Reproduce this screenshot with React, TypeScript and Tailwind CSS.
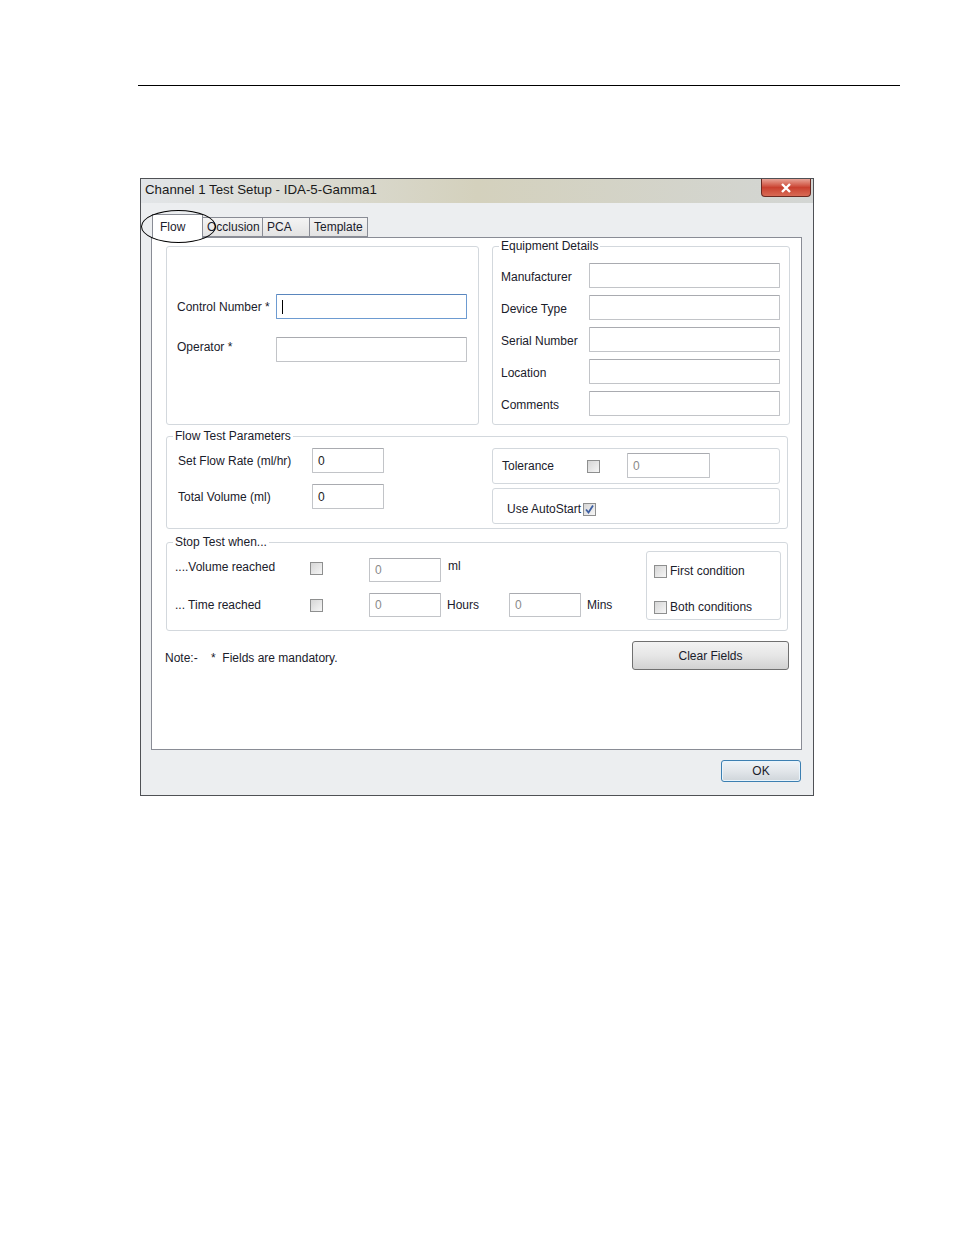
import { ReactNode } from 'react';

const FONT = { fontFamily: '"Liberation Sans", Arial, sans-serif' };

function GroupBox({ title, className, children }: { title?: string; className: string; children?: ReactNode }) {
  return (
    <div className={`relative border border-[#d3d8dd] rounded-[3px] shrink-0 ${className}`}>
      {title && (
        <span className="absolute -top-[8px] left-[6px] px-[2px] bg-white leading-[14px]">{title}</span>
      )}
      {children}
    </div>
  );
}

function TextBox({ value, className = '', focused, dim }: { value?: string; className?: string; focused?: boolean; dim?: boolean }) {
  const border = focused
    ? 'border-[#6d9bd1] border-t-[#5a86bd]'
    : 'border-[#c2c4c8] border-t-[#a9abb0]';
  return (
    <div className={`border ${border} bg-white flex items-center pl-[5px] rounded-[1px] shrink-0 ${className}`}>
      {focused && <span className="w-px h-[14px] bg-black" />}
      {value && <span className={dim ? 'text-[#8a8a8a]' : 'text-[#222]'}>{value}</span>}
    </div>
  );
}

function CheckBox({ checked }: { checked?: boolean }) {
  return (
    <span className="w-[13px] h-[13px] shrink-0 border border-[#8e8f8f] bg-linear-to-br from-[#d6d6d6] to-[#f6f6f6] flex items-center justify-center">
      {checked && (
        <svg width="11" height="11" viewBox="0 0 11 11">
          <path d="M2 5.5 L4.5 8.5 L9 1.5" stroke="#3d5fa3" strokeWidth="1.8" fill="none" />
        </svg>
      )}
    </span>
  );
}

function Tab({ label, active, width }: { label: string; active?: boolean; width: string }) {
  if (active) {
    return (
      <div className={`${width} h-[24px] -mb-px relative z-10 bg-white border border-b-0 border-[#898c95] flex items-center pl-[7px]`}>
        {label}
      </div>
    );
  }
  return (
    <div className={`${width} h-[20px] bg-linear-to-b from-[#f4f4f4] to-[#e3e3e3] border border-l-0 border-[#898c95] flex items-center pl-[4px]`}>
      {label}
    </div>
  );
}

export default function App() {
  return (
    <div className="w-[954px] h-[1235px] bg-white text-[12px] text-[#1a202b]" style={FONT}>
      <div className="pt-[85px] pl-[138px]">
        <div className="w-[762px] h-px bg-black" />
      </div>

      <div className="ml-[140px] mt-[92px] w-[674px] border border-[#4f5155] bg-[#eceef0]">
        {/* title bar */}
        <div className="h-[24px] flex justify-between bg-linear-to-r from-[#e2e5e8] via-[#d4d1bd] to-[#d3d6d4]">
          <span className="pl-[4px] pt-[1px] text-[13.3px] text-[#1a1a1a]">Channel 1 Test Setup - IDA-5-Gamma1</span>
          <div className="mr-[2px] w-[50px] h-[18px] rounded-b-[4px] border border-t-0 border-[#6b2a22] bg-linear-to-b from-[#e7a296] via-[#c9402f] to-[#d86a55] flex items-center justify-center">
            <svg width="12" height="10" viewBox="0 0 12 10">
              <path d="M2 1 L10 9 M10 1 L2 9" stroke="white" strokeWidth="2.4" />
            </svg>
          </div>
        </div>

        <div className="pt-[10px] pl-[10px] pr-[12px]">
          {/* tabs */}
          <div className="relative h-[24px] flex items-end pl-px">
            <Tab label="Flow" active width="w-[51px]" />
            <div className="flex items-end">
              <Tab label="Occlusion" width="w-[60px]" />
              <Tab label="PCA" width="w-[47px]" />
              <Tab label="Template" width="w-[58px]" />
            </div>
            <div className="absolute left-[-10px] top-[-3px] w-[75px] h-[33px] rounded-[50%] border-[1.5px] border-black z-20" />
          </div>

          {/* tab panel */}
          <div className="w-[651px] h-[513px] border border-[#898c95] bg-white pl-[14px] pr-[11px] pt-[8px]">
            <div className="flex gap-[13px]">
              <GroupBox className="w-[313px] h-[179px]">
                <div className="pt-[47px] pl-[10px] flex flex-col gap-[18px]">
                  <div className="flex items-center">
                    <span className="w-[99px]">Control Number *</span>
                    <TextBox focused className="w-[191px] h-[25px]" />
                  </div>
                  <div className="flex items-center">
                    <span className="w-[99px] -mt-[6px]">Operator *</span>
                    <TextBox className="w-[191px] h-[25px]" />
                  </div>
                </div>
              </GroupBox>

              <GroupBox title="Equipment Details" className="w-[298px] h-[179px]">
                <div className="pt-[16px] pl-[8px] flex flex-col gap-[7px]">
                  {['Manufacturer', 'Device Type', 'Serial Number', 'Location', 'Comments'].map((l) => (
                    <div key={l} className="flex items-center">
                      <span className="w-[88px] pt-[2px]">{l}</span>
                      <TextBox className="w-[191px] h-[25px]" />
                    </div>
                  ))}
                </div>
              </GroupBox>
            </div>

            <GroupBox title="Flow Test Parameters" className="mt-[11px] w-[622px] h-[93px]">
              <div className="flex">
                <div className="w-[325px] shrink-0 pl-[11px] pt-[11px] flex flex-col gap-[11px]">
                  <div className="flex items-center">
                    <span className="w-[134px]">Set Flow Rate (ml/hr)</span>
                    <TextBox value="0" className="w-[72px] h-[25px]" />
                  </div>
                  <div className="flex items-center">
                    <span className="w-[134px]">Total Volume (ml)</span>
                    <TextBox value="0" className="w-[72px] h-[25px]" />
                  </div>
                </div>
                <div className="w-[288px] pt-[11px] flex flex-col gap-[4px]">
                  <div className="h-[36px] border border-[#d3d8dd] rounded-[3px] flex items-center pl-[9px]">
                    <span className="w-[85px]">Tolerance</span>
                    <CheckBox />
                    <TextBox value="0" dim className="ml-[27px] w-[83px] h-[25px] self-start mt-[4px]" />
                  </div>
                  <div className="h-[36px] border border-[#d3d8dd] rounded-[3px] flex items-center pl-[14px] pt-[6px]">
                    <span>Use AutoStart</span>
                    <span className="ml-[2px]">
                      <CheckBox checked />
                    </span>
                  </div>
                </div>
              </div>
            </GroupBox>

            <GroupBox title="Stop Test when..." className="mt-[13px] w-[622px] h-[89px]">
              <div className="flex">
                <div className="w-[479px] shrink-0 pl-[8px] pt-[15px] flex flex-col gap-[11px]">
                  <div className="flex items-center">
                    <span className="w-[135px] -mt-[6px]">....Volume reached</span>
                    <span className="-mt-[4px]">
                      <CheckBox />
                    </span>
                    <TextBox value="0" dim className="ml-[46px] w-[72px] h-[24px]" />
                    <span className="ml-[7px] -mt-[8px]">ml</span>
                  </div>
                  <div className="flex items-center">
                    <span className="w-[135px]">... Time reached</span>
                    <CheckBox />
                    <TextBox value="0" dim className="ml-[46px] w-[72px] h-[24px]" />
                    <span className="ml-[6px] w-[62px]">Hours</span>
                    <TextBox value="0" dim className="w-[72px] h-[24px]" />
                    <span className="ml-[6px]">Mins</span>
                  </div>
                </div>
                <div className="mt-[8px] w-[135px] h-[69px] border border-[#d3d8dd] rounded-[3px] pl-[7px] pt-[12px] flex flex-col gap-[22px]">
                  <div className="flex items-center gap-[3px] h-[14px]">
                    <CheckBox />
                    <span>First condition</span>
                  </div>
                  <div className="flex items-center gap-[3px] h-[14px]">
                    <CheckBox />
                    <span>Both conditions</span>
                  </div>
                </div>
              </div>
            </GroupBox>

            <div className="mt-[10px] -ml-px w-[624px] flex items-center justify-between">
              <span className="mt-[4px]">
                Note:-&nbsp;&nbsp;&nbsp;&nbsp;* &nbsp;Fields are mandatory.
              </span>
              <button className="w-[157px] h-[29px] rounded-[3px] border border-[#707070] bg-linear-to-b from-[#f3f3f3] via-[#e6e6e6] to-[#d2d2d2] text-[12px] text-[#1a202b]">
                Clear Fields
              </button>
            </div>
          </div>

          {/* footer */}
          <div className="h-[45px] flex justify-end pt-[10px]">
            <button className="w-[80px] h-[22px] rounded-[3px] border border-[#3c7fb1] bg-linear-to-b from-[#eef3f7] via-[#e2e6ea] to-[#cfd5da] text-[12px] text-[#1a202b] shadow-[inset_0_0_0_1px_#e8f4fc]">
              OK
            </button>
          </div>
        </div>
      </div>
    </div>
  );
}
